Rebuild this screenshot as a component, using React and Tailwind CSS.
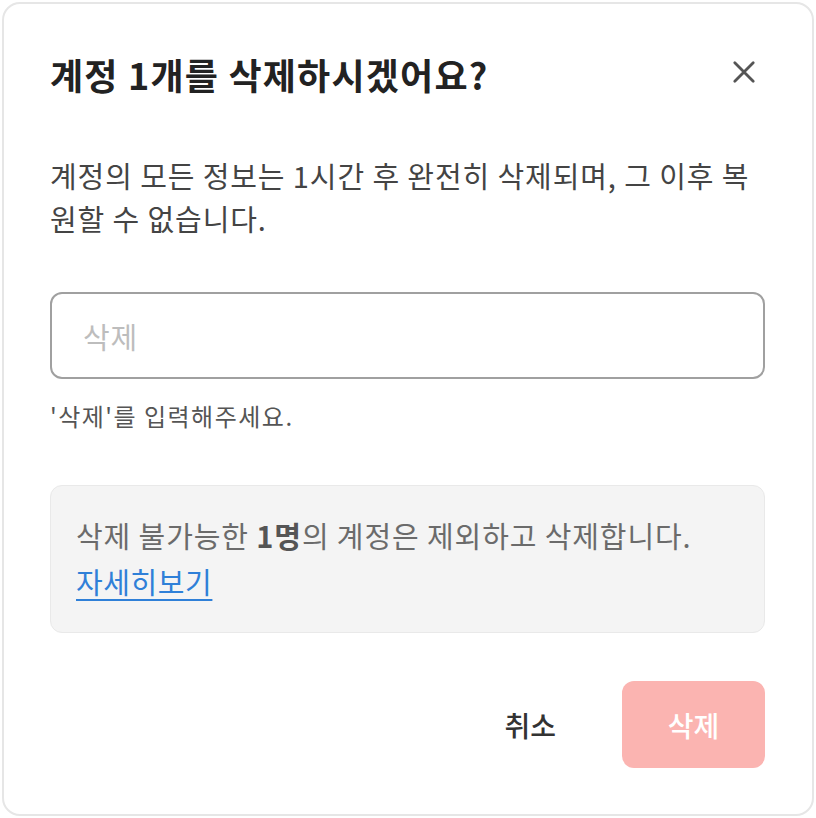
import React, { useState } from "react";

// Delete-account confirmation modal
const FONT = { fontFamily: '"Noto Sans CJK KR", "Noto Sans", sans-serif' };

function CloseIcon() {
  return (
    <svg viewBox="0 0 24 24" className="w-[26px] h-[26px] text-[#555]" fill="none" stroke="currentColor" strokeWidth="2.6" strokeLinecap="round">
      <path d="M3.5 3.5l17 17M20.5 3.5l-17 17" />
    </svg>
  );
}

export default function App() {
  const [value, setValue] = useState("");
  const ok = value === "삭제";

  return (
    <div className="w-[816px] h-[818px] bg-white p-[2px]" style={FONT}>
      <div className="h-[814px] w-[812px] border-2 border-[#e6e6e6] rounded-[18px] bg-white pt-[45px] pl-[46px] pr-[47px] pb-[46px] flex flex-col">
        <div className="flex items-start justify-between">
          <h2 className="text-[36px] leading-[50px] font-bold text-[#222] tracking-[1.2px]">계정 1개를 삭제하시겠어요?</h2>
          <button className="mt-[10px] mr-[8px]" aria-label="닫기"><CloseIcon /></button>
        </div>

        <p className="mt-[55px] text-[29px] leading-[43px] text-[#444] tracking-[0.9px]">
          계정의 모든 정보는 1시간 후 완전히 삭제되며, 그 이후 복원할 수 없습니다.
        </p>

        <input
          value={value}
          onChange={(e) => setValue(e.target.value)}
          placeholder="삭제"
          className="mt-[52px] h-[87px] shrink-0 w-full rounded-[12px] border-2 border-[#a0a0a0] px-[31px] text-[29px] tracking-[0.9px] text-[#333] placeholder:text-[#bdbdbd] outline-none"
          style={FONT}
        />
        <p className="mt-[20px] text-[24px] leading-[34px] text-[#555] tracking-[1.5px]">'삭제'를 입력해주세요.</p>

        <div className="mt-[52px] rounded-[12px] border border-[#e9e9e9] bg-[#f4f4f4] px-[25px] pt-[26px] pb-[28px]">
          <p className="text-[29px] leading-[46px] text-[#6b6b6b] tracking-[0.9px]">
            삭제 불가능한 <span className="font-bold text-[#555]">1명</span>의 계정은 제외하고 삭제합니다.
          </p>
          <a href="#" className="block w-fit text-[29px] leading-[46px] text-[#2f80d8] tracking-[0.6px] underline underline-offset-[5px] decoration-[2px]">자세히보기</a>
        </div>

        <div className="mt-[48px] flex items-center justify-end gap-[42px]">
          <button className="px-[24px] h-[87px] text-[28px] font-medium text-[#333]">취소</button>
          <button disabled={!ok} className={`w-[143px] h-[87px] rounded-[12px] text-[28px] font-medium text-white ${ok ? "bg-[#f0443a]" : "bg-[#fbb4b1]"}`}>삭제</button>
        </div>
      </div>
    </div>
  );
}
